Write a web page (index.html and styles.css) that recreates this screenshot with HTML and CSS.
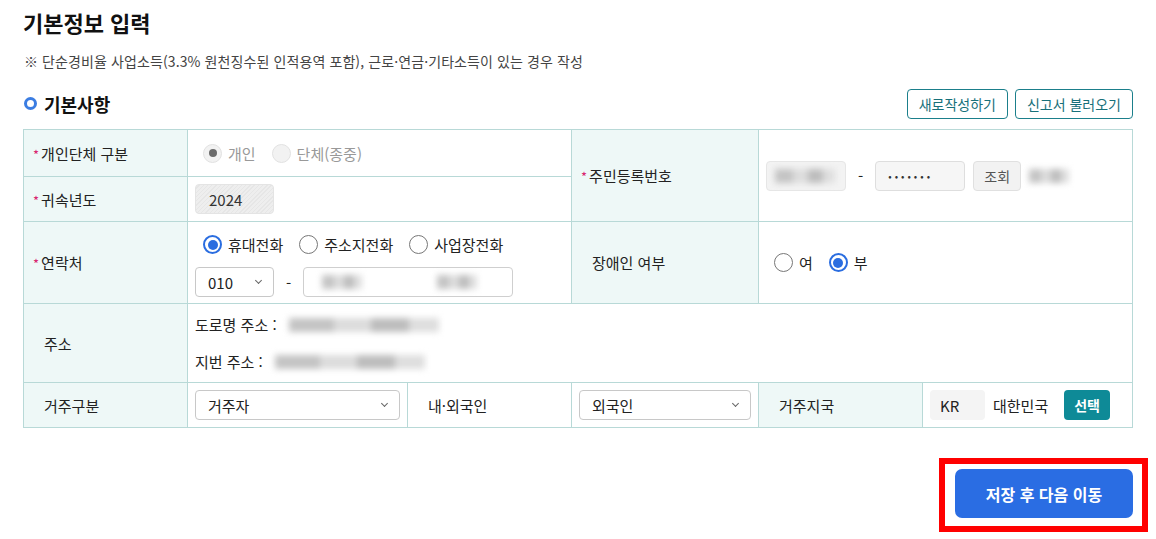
FILE: index.html
```html
<!DOCTYPE html>
<html lang="ko">
<head>
    <meta charset="UTF-8">
    <meta name="viewport" content="width=device-width, initial-scale=1.0">
    <title>기본정보 입력</title>
    <link rel="stylesheet" href="styles.css">
</head>

<body>
    <div class="page">
        <h1 class="page-title">기본정보 입력</h1>
        <p class="note">※ 단순경비율 사업소득(3.3% 원천징수된 인적용역 포함), 근로·연금·기타소득이 있는 경우 작성</p>

        <div class="section-head">
            <h2><span class="bullet"></span>기본사항</h2>
            <div class="head-buttons">
                <button class="btn-line">새로작성하기</button>
                <button class="btn-line">신고서 불러오기</button>
            </div>
        </div>

        <table class="info-table">
            <colgroup>
                <col style="width:164px">
                <col style="width:220px">
                <col style="width:164px">
                <col style="width:187px">
                <col style="width:164px">
                <col>
            </colgroup>
            <tr class="row-a">
                <th><span class="req">*</span>개인단체 구분</th>
                <td colspan="2">
                    <div class="radios">
                        <label class="radio disabled checked"><span class="dot"></span>개인</label>
                        <label class="radio disabled"><span class="dot"></span>단체(종중)</label>
                    </div>
                </td>
                <th rowspan="2"><span class="req">*</span>주민등록번호</th>
                <td colspan="2" rowspan="2">
                    <div class="inline">
                        <span class="field field-id"><span class="blur w60"></span></span>
                        <span class="dash">-</span>
                        <span class="field field-pw">•••••••</span>
                        <button class="btn-gray">조회</button>
                        <span class="blur w40"></span>
                    </div>
                </td>
            </tr>
            <tr class="row-b">
                <th><span class="req">*</span>귀속년도</th>
                <td colspan="2"><span class="field field-year">2024</span></td>
            </tr>
            <tr class="row-c">
                <th><span class="req">*</span>연락처</th>
                <td colspan="2" class="contact">
                    <div class="radios">
                        <label class="radio checked"><span class="dot"></span>휴대전화</label>
                        <label class="radio"><span class="dot"></span>주소지전화</label>
                        <label class="radio"><span class="dot"></span>사업장전화</label>
                    </div>
                    <div class="inline phone">
                        <span class="select select-tel">010<span class="chev"></span></span>
                        <span class="dash">-</span>
                        <span class="field field-tel"><span class="blur w40"></span><span class="blur w40 gap"></span></span>
                    </div>
                </td>
                <th class="plain">장애인 여부</th>
                <td colspan="2">
                    <div class="radios">
                        <label class="radio"><span class="dot"></span>여</label>
                        <label class="radio checked"><span class="dot"></span>부</label>
                    </div>
                </td>
            </tr>
            <tr class="row-d">
                <th class="plain">주소</th>
                <td colspan="5">
                    <div class="addr"><span class="addr-label">도로명 주소 :</span><span class="blur w150"></span></div>
                    <div class="addr"><span class="addr-label">지번 주소 :</span><span class="blur w150"></span></div>
                </td>
            </tr>
            <tr class="row-e">
                <th class="plain">거주구분</th>
                <td><span class="select select-wide">거주자<span class="chev"></span></span></td>
                <td class="plain-label">내·외국인</td>
                <td><span class="select select-wide">외국인<span class="chev"></span></span></td>
                <th class="plain">거주지국</th>
                <td>
                    <div class="inline">
                        <span class="field field-code">KR</span>
                        <span class="country">대한민국</span>
                        <button class="btn-teal">선택</button>
                    </div>
                </td>
            </tr>
        </table>

        <div class="bottom">
            <div class="highlight">
                <button class="btn-primary">저장 후 다음 이동</button>
            </div>
        </div>
    </div>
</body>
</html>
```

FILE: styles.css
```css
body {
    margin: 0;
    padding: 0;
    background: #fff;
    color: #222;
    font-family: "Noto Sans CJK KR", "Noto Sans", sans-serif;
}

.page {
    padding: 7px 0 0 23px;
}

.page-title {
    margin: 0;
    font-size: 22px;
    font-weight: 700;
    line-height: 30px;
    color: #111;
}

.note {
    margin: 14px 0 0 1px;
    font-size: 14px;
    line-height: 20px;
    color: #444;
    letter-spacing: 0.1px;
}

.section-head {
    width: 1110px;
    display: flex;
    justify-content: space-between;
    align-items: center;
    margin-top: 15px;
    height: 35px;
}

.section-head h2 {
    margin: 0;
    font-size: 18px;
    font-weight: 700;
    display: flex;
    align-items: center;
    color: #111;
}

.bullet {
    width: 7px;
    height: 7px;
    border: 3px solid #3b7de2;
    border-radius: 50%;
    margin: 0 7px 0 1px;
}

.head-buttons {
    display: flex;
    gap: 7px;
}

.btn-line {
    height: 30px;
    padding: 0 11px;
    background: #fff;
    border: 1px solid #1b7f8b;
    border-radius: 4px;
    color: #17707a;
    font-family: inherit;
    font-size: 14px;
}

.info-table {
    width: 1110px;
    border-collapse: collapse;
    table-layout: fixed;
    margin-top: 8px;
    font-size: 15px;
}

.info-table th,
.info-table td {
    border: 1px solid #b8d9d7;
    padding: 0 7px;
    vertical-align: middle;
    text-align: left;
}

.info-table th {
    background: #eef8f7;
    font-weight: 400;
    color: #222;
    padding-left: 9px;
}

.info-table th.plain,
.info-table td.plain-label {
    padding-left: 20px;
}

.info-table td.contact {
    padding-top: 6px;
}

.req {
    color: #d8246f;
    font-size: 13px;
    margin-right: 2px;
}

.row-a { height: 47px; }
.row-b { height: 45px; }
.row-c { height: 82px; }
.row-d { height: 79px; }
.row-e { height: 45px; }

.radios {
    display: flex;
    gap: 16px;
    padding-left: 8px;
}

.radio {
    display: flex;
    align-items: center;
    gap: 6px;
    color: #222;
}

.radio .dot {
    width: 17px;
    height: 17px;
    border: 1px solid #777;
    border-radius: 50%;
    background: #fff;
    position: relative;
}

.radio.checked .dot {
    border: 2px solid #2a6de0;
    width: 15px;
    height: 15px;
}

.radio.checked .dot::after {
    content: "";
    position: absolute;
    left: 2.5px;
    top: 2.5px;
    width: 10px;
    height: 10px;
    border-radius: 50%;
    background: #2a6de0;
}

.radio.disabled {
    color: #999;
}

.radio.disabled .dot {
    border: 1px solid #e2e2e2;
    background: #f2f2f2;
    width: 17px;
    height: 17px;
}

.radio.disabled.checked .dot::after {
    left: 4.5px;
    top: 4.5px;
    width: 8px;
    height: 8px;
    background: #6b6b6b;
}

.inline {
    display: flex;
    align-items: center;
}

.phone {
    margin-top: 12px;
}

.dash {
    margin: 0 12px;
    color: #222;
}

.field {
    display: inline-flex;
    align-items: center;
    height: 30px;
    box-sizing: border-box;
    border-radius: 4px;
    color: #333;
}

.field-year {
    width: 79px;
    padding-left: 13px;
    background: repeating-linear-gradient(135deg, #eeeeee 0 2px, #e6e6e6 2px 3px);
    border: 1px solid #e4e4e4;
}

.field-id {
    width: 80px;
    border: 1px solid #e6e6e6;
    background: #f3f3f3;
    padding-left: 8px;
}

.field-pw {
    width: 90px;
    border: 1px solid #dedede;
    background: #f6f6f6;
    padding-left: 12px;
    font-size: 10px;
    letter-spacing: 3px;
}

.field-tel {
    width: 210px;
    border: 1px solid #cfcfcf;
    padding-left: 10px;
}

.field-code {
    width: 55px;
    background: #f4f4f4;
    padding-left: 10px;
    color: #222;
}

.btn-gray {
    height: 30px;
    margin-left: 8px;
    padding: 0 10px;
    background: #f2f2f2;
    border: 1px solid #e0e0e0;
    border-radius: 4px;
    color: #555;
    font-family: inherit;
    font-size: 14px;
}

.blur {
    display: inline-block;
    height: 14px;
    background: linear-gradient(90deg, #c4c4c4 0 30%, #dcdcdc 30% 55%, #bdbdbd 55% 80%, #dedede 80%);
    filter: blur(3px);
    margin-left: 8px;
}

.w40 { width: 40px; }
.w60 { width: 60px; margin-left: 0; }
.w150 { width: 150px; }
.gap { margin-left: 75px; }

.select {
    display: inline-flex;
    align-items: center;
    justify-content: space-between;
    height: 30px;
    box-sizing: border-box;
    border: 1px solid #c8c8c8;
    border-radius: 4px;
    padding: 0 12px;
    background: #fff;
    color: #222;
}

.select-tel {
    width: 79px;
}

.select-wide {
    width: 100%;
}

.chev {
    width: 4px;
    height: 4px;
    border-right: 1px solid #666;
    border-bottom: 1px solid #666;
    transform: rotate(45deg);
    margin-top: -3px;
}

.addr {
    display: flex;
    align-items: center;
    height: 20px;
}

.addr + .addr {
    margin-top: 17px;
}

.addr-label {
    margin-right: 4px;
}

.country {
    margin-left: 8px;
    color: #222;
}

.btn-teal {
    height: 30px;
    margin-left: 16px;
    padding: 0 10px;
    background: #0e8a97;
    border: none;
    border-radius: 4px;
    color: #fff;
    font-family: inherit;
    font-size: 14px;
    font-weight: 700;
}

.bottom {
    width: 1125px;
    display: flex;
    justify-content: flex-end;
    margin-top: 30px;
}

.highlight {
    border: 6px solid #f00;
    padding: 5px 9px 8px 10px;
}

.btn-primary {
    width: 178px;
    height: 49px;
    background: #2a6de3;
    border: none;
    border-radius: 7px;
    color: #fff;
    font-family: inherit;
    font-size: 16px;
    font-weight: 700;
    display: block;
}
```
